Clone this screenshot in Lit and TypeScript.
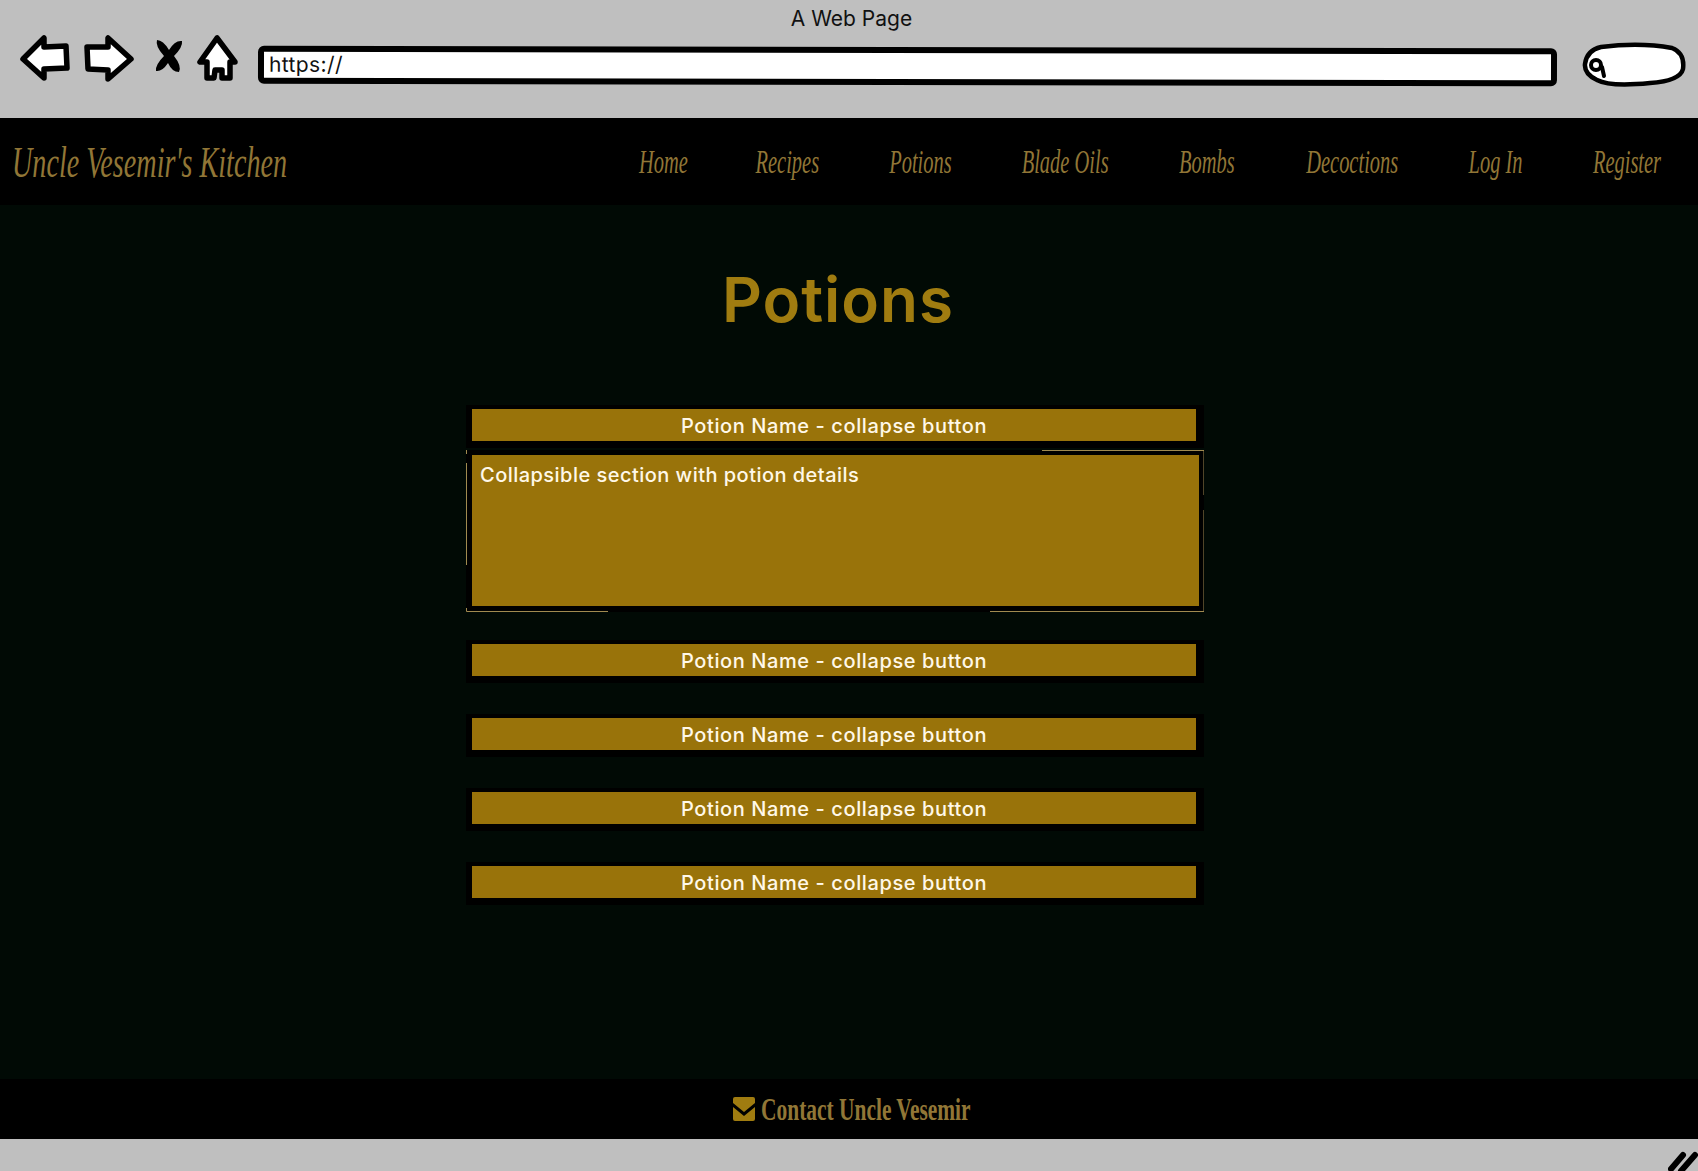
import { LitElement, html, css } from 'lit';
import { customElement } from 'lit/decorators.js';

interface NavItem {
  label: string;
  width: number;
}

const NAV_ITEMS: NavItem[] = [
  { label: 'Home', width: 48 },
  { label: 'Recipes', width: 65 },
  { label: 'Potions', width: 65 },
  { label: 'Blade Oils', width: 88 },
  { label: 'Bombs', width: 59 },
  { label: 'Decoctions', width: 96 },
  { label: 'Log In', width: 55 },
  { label: 'Register', width: 71 },
];

@customElement('app-root')
export class AppRoot extends LitElement {
  static styles = css`
    :host {
      display: flex;
      flex-direction: column;
      min-height: 100vh;
      background: #010a05;
      font-family: 'Inter', 'Liberation Sans', sans-serif;
    }
    .toolbar {
      height: 118px;
      background: #bfbfbf;
      flex: none;
    }
    .page-title {
      height: 30px;
      padding: 6px 0 0 5px;
      box-sizing: border-box;
      line-height: 26px;
      text-align: center;
      font-size: 21px;
      color: #111;
    }
    .toolbar-row {
      display: flex;
      align-items: flex-start;
    }
    .toolbar-row svg {
      display: block;
      flex: none;
    }
    .address {
      box-sizing: border-box;
      width: 1299px;
      height: 38px;
      margin-top: 17px;
      padding-left: 5px;
      border: 6px solid #000;
      border-radius: 6px;
      background: #fff;
      font-size: 21px;
      letter-spacing: 0.4px;
      line-height: 25px;
      color: #111;
      transform: rotate(0.12deg);
    }
    .search {
      margin-left: 25px;
    }
    .nav {
      height: 87px;
      flex: none;
      display: flex;
      align-items: center;
      justify-content: space-between;
      padding: 2px 36px 0 12px;
      box-sizing: border-box;
      background: #000;
      color: #917636;
      font-family: 'Liberation Serif', serif;
      font-style: italic;
    }
    .brand {
      width: 274px;
      font-size: 44px;
      white-space: nowrap;
    }
    .brand span {
      display: inline-block;
      transform: scaleX(0.64);
      transform-origin: left center;
    }
    .links {
      display: flex;
      gap: 68px;
    }
    .link {
      display: flex;
      justify-content: center;
      font-size: 33px;
      white-space: nowrap;
    }
    .link span {
      display: inline-block;
      transform: scaleX(0.62);
    }
    main {
      flex: 1;
      padding-left: 466px;
    }
    .column {
      width: 738px;
    }
    h1 {
      margin: 0;
      height: 200px;
      padding: 55px 0 0 6px;
      box-sizing: border-box;
      text-align: center;
      font-size: 62px;
      line-height: 80px;
      letter-spacing: 1px;
      font-weight: 600;
      color: #a07c10;
    }
    .row {
      box-sizing: border-box;
      height: 43px;
      margin-bottom: 31px;
      padding: 4px 8px 7px 6px;
      background: #000;
    }
    .row.first {
      margin-bottom: 2px;
    }
    .row button {
      display: block;
      width: 100%;
      height: 100%;
      padding: 2px 0 0 0;
      border: none;
      background: #99730a;
      color: #fff8e8;
      font: 500 20px 'Inter', 'Liberation Sans', sans-serif;
      letter-spacing: 0.6px;
    }
    .panel {
      position: relative;
      box-sizing: border-box;
      height: 162px;
      margin-bottom: 28px;
      padding: 5px 5px 6px 6px;
      background: #000;
    }
    .panel-body {
      height: 100%;
      padding: 7px 8px;
      box-sizing: border-box;
      background: #99730a;
      color: #fff8e8;
      font-size: 20px;
      font-weight: 500;
      letter-spacing: 0.47px;
      line-height: 26px;
    }
    .sketch {
      position: absolute;
      inset: 0;
      pointer-events: none;
    }
    footer {
      height: 60px;
      flex: none;
      display: flex;
      align-items: center;
      justify-content: center;
      gap: 6px;
      padding-left: 7px;
      background: #000;
      color: #917636;
      font-family: 'Liberation Serif', serif;
      font-size: 32px;
      font-weight: 700;
    }
    footer .text {
      width: 211px;
      white-space: nowrap;
    }
    footer .text span {
      display: inline-block;
      transform: scaleX(0.67);
      transform-origin: left center;
    }
    .status {
      position: relative;
      height: 32px;
      flex: none;
      background: #bfbfbf;
    }
    .grip {
      position: absolute;
      right: 0;
      bottom: 0;
    }
  `;

  private renderNavIcons() {
    return html`
      <svg width="258" height="60" viewBox="0 30 258 60">
        <path d="M23 59 L44 38 L44 47 L66 46 L67 68 L44 69 L44 78 Z" fill="#fff" stroke="#000" stroke-width="5.5" stroke-linejoin="round" />
        <path d="M131 59 L108 38 L108 47 L87 47 L88 69 L108 70 L108 79 Z" fill="#fff" stroke="#000" stroke-width="5.5" stroke-linejoin="round" />
        <path d="M157 40 Q163 40 169 50 Q175 40 182 41 Q183 47 174 56 Q182 66 179 72 Q172 72 168 63 Q162 72 156 71 Q155 65 164 56 Q155 46 157 40 Z" fill="#000" />
        <path d="M217 38 L200 62 L207 62 L207 78 L214 78 L215 70 L222 70 L222 78 L230 78 L230 62 L235 62 Z" fill="#fff" stroke="#000" stroke-width="5.5" stroke-linejoin="round" />
      </svg>
    `;
  }

  private renderSearch() {
    return html`
      <svg class="search" width="106" height="60" viewBox="1582 30 106 60">
        <path d="M1601 47 Q1640 42 1672 48 Q1685 53 1683 69 Q1680 81 1650 83 Q1610 87 1597 80 Q1584 74 1585 64 Q1587 50 1601 47 Z" fill="#fff" stroke="#000" stroke-width="4.5" />
        <circle cx="1596" cy="65" r="5" fill="#fff" stroke="#000" stroke-width="4" />
        <path d="M1602 67 L1604 76" stroke="#000" stroke-width="4" stroke-linecap="round" />
      </svg>
    `;
  }

  private renderRow(first = false) {
    return html`
      <div class="row ${first ? 'first' : ''}">
        <button>Potion Name - collapse button</button>
      </div>
    `;
  }

  render() {
    return html`
      <div class="toolbar">
        <div class="page-title">A Web Page</div>
        <div class="toolbar-row">
          ${this.renderNavIcons()}
          <div class="address">https://</div>
          ${this.renderSearch()}
        </div>
      </div>
      <nav class="nav">
        <div class="brand"><span>Uncle Vesemir's Kitchen</span></div>
        <div class="links">
          ${NAV_ITEMS.map(
            (item) => html`<div class="link" style="width:${item.width}px"><span>${item.label}</span></div>`
          )}
        </div>
      </nav>
      <main>
        <div class="column">
          <h1>Potions</h1>
          ${this.renderRow(true)}
          <div class="panel">
            <div class="panel-body">Collapsible section with potion details</div>
            <svg class="sketch" width="738" height="162" viewBox="0 0 738 162" fill="none" stroke="#a08a50">
              <path d="M0.5 0 V4 M0.5 13 V115 M0.5 158 V161.5 H142 M524 161.5 H738 V60 M738 45 V0.5 H576" />
            </svg>
          </div>
          ${[0, 1, 2, 3].map(() => this.renderRow())}
        </div>
      </main>
      <footer>
        <svg width="22" height="24" viewBox="0 0 22 24">
          <path d="M2 0 H20 Q22 0 22 2 V6 L11 15 L0 6 V2 Q0 0 2 0 Z M0 10 L11 19 L22 10 V22 Q22 24 20 24 H2 Q0 24 0 22 Z" fill="#a07c10" />
        </svg>
        <div class="text"><span>Contact Uncle Vesemir</span></div>
      </footer>
      <div class="status">
        <svg class="grip" width="30" height="22" viewBox="0 0 30 22">
          <path d="M3 20 L15 6 M13 22 L27 6" stroke="#000" stroke-width="6" stroke-linecap="round" />
        </svg>
      </div>
    `;
  }
}
